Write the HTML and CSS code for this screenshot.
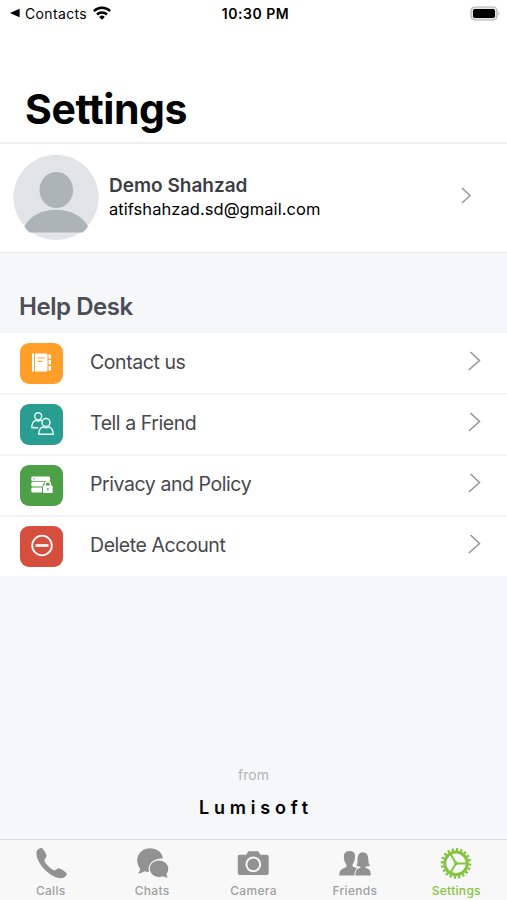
FILE: index.html
```html
<!DOCTYPE html>
<html lang="en">
  <head>
    <meta charset="UTF-8" />
    <meta name="viewport" content="width=device-width, initial-scale=1.0" />
    <title>Settings</title>
    <link rel="stylesheet" href="styles.css">
  </head>
  <body>
    <div class="screen">
      <header class="status-bar">
        <div class="status-left">
          <svg width="10" height="10" viewBox="0 0 10 10"><path d="M0 5L9.6 .8v8.4z"/></svg>
          <span class="status-back">Contacts</span>
          <svg class="wifi" width="18" height="14" viewBox="0 0 18 14" fill="none" stroke="#000" stroke-width="2.5">
            <path d="M.9 5.2a11.5 11.5 0 0 1 16.2 0"/>
            <path d="M4 8.5a7.1 7.1 0 0 1 10 0"/>
            <path d="M9 13.7L6.2 10.9a4 4 0 0 1 5.6 0z" fill="#000" stroke="none"/>
          </svg>
        </div>
        <span class="status-time">10:30 PM</span>
        <div class="status-right">
          <svg width="31" height="15" viewBox="0 0 31 15">
            <rect x="1" y="1" width="26" height="13" rx="3.8" fill="#e6e6e6" stroke="#b4b4b4" stroke-width="1.2"/>
            <rect x="3" y="3" width="22" height="9" rx="1.8"/>
            <path d="M28.400 5.200q2 2.300 0 4.600z" fill="#b4b4b4"/>
          </svg>
        </div>
      </header>

      <h1 class="page-title">Settings</h1>

      <section class="profile">
        <svg class="avatar" width="86" height="86" viewBox="0 0 86 86">
          <circle cx="43" cy="42.500" r="42.700" fill="#e1e5e7"/>
          <ellipse cx="43.300" cy="35" rx="16.800" ry="18" fill="#acb4b6"/>
          <path d="M11.300 71.500C17 61 29 54.700 43 54.700S69.500 61 75 71.500Q72.500 75 69.500 77.500H16.500Q13.500 75 11.300 71.500z" fill="#acb4b6"/>
        </svg>
        <div class="profile-text">
          <div class="profile-name">Demo Shahzad</div>
          <div class="profile-email">atifshahzad.sd@gmail.com</div>
        </div>
        <svg class="chevron" width="10" height="17" viewBox="0 0 10 17"><path d="M1 1l8 7.500-8 7.500"/></svg>
      </section>

      <h2 class="section-title">Help Desk</h2>

      <ul class="menu">
        <li class="menu-item">
          <span class="menu-icon orange">
            <svg width="43" height="40" viewBox="0 0 43 40" fill="#fff">
              <rect x="12" y="10.500" width="2" height="18"/>
              <path d="M15 10.500h11q1.500 0 1.500 1.500v15q0 1.500-1.500 1.500H15z"/>
              <path d="M28.500 11.500h1.500q1 0 1 1v3.300h-2.500zM28.500 17h2.500v4.500h-2.500zM28.500 23h2.500v3.500q0 1-1 1h-1.500z"/>
              <path d="M18 15h6.500M18 18.300h4" stroke="#ff9f2a" stroke-width="1.200"/>
            </svg>
          </span>
          <span class="menu-label">Contact us</span>
          <svg class="chevron" width="13" height="20" viewBox="0 0 13 20"><path d="M2.500 1l9 8.500L.8 19"/></svg>
        </li>
        <li class="menu-item">
          <span class="menu-icon teal">
            <svg width="43" height="40" viewBox="0 0 43 40" fill="none" stroke="#e5fffb" stroke-width="1.400" stroke-linejoin="round">
              <circle cx="18.200" cy="12.200" r="3.500"/>
              <path d="M18.200 23.700h-6.300c0-4 1.300-6.500 4-7.500 1.500 1 3.200 1 4.700 0q1 .4 1.700 1.100"/>
              <circle cx="26" cy="18.500" r="4"/>
              <path d="M18.700 30.200c0-4 1.500-6.500 4.300-7.400 2 1.300 4.200 1.300 6.200 0 2.500 1 4 3.500 4 7.400z"/>
            </svg>
          </span>
          <span class="menu-label">Tell a Friend</span>
          <svg class="chevron" width="13" height="20" viewBox="0 0 13 20"><path d="M2.500 1l9 8.500L.8 19"/></svg>
        </li>
        <li class="menu-item">
          <span class="menu-icon green">
            <svg width="43" height="40" viewBox="0 0 43 40" fill="#fff">
              <rect x="11.300" y="11.500" width="18.800" height="4.700" rx="1.300"/>
              <path d="M12.600 17h12.200q-2 1.500-2.300 4.500h-9.900q-1.300 0-1.300-1.300v-2q0-1.200 1.300-1.200zM12.600 22.500h9.400v5h-9.400q-1.300 0-1.300-1.300v-2.400q0-1.300 1.300-1.300z"/>
              <rect x="23" y="20.500" width="9.700" height="7.500" rx="1"/>
              <path d="M25.200 21v-1.600a2.600 2.600 0 0 1 5.200 0V21" fill="none" stroke="#fff" stroke-width="1.500"/>
              <path d="M27.900 23v2.500" stroke="#4da045" stroke-width="1.300"/>
              <circle cx="14" cy="13.700" r=".7" fill="#4da045"/>
            </svg>
          </span>
          <span class="menu-label">Privacy and Policy</span>
          <svg class="chevron" width="13" height="20" viewBox="0 0 13 20"><path d="M2.500 1l9 8.500L.8 19"/></svg>
        </li>
        <li class="menu-item">
          <span class="menu-icon red">
            <svg width="43" height="40" viewBox="0 0 43 40" fill="none" stroke="#fff">
              <circle cx="22" cy="19.500" r="9.800" stroke-width="1.800"/>
              <path d="M15.500 19.500h13" stroke-width="2.600"/>
            </svg>
          </span>
          <span class="menu-label">Delete Account</span>
          <svg class="chevron" width="13" height="20" viewBox="0 0 13 20"><path d="M2.500 1l9 8.500L.8 19"/></svg>
        </li>
      </ul>

      <footer class="credit">
        <div class="credit-from">from</div>
        <div class="credit-name">Lumisoft</div>
      </footer>

      <nav class="tab-bar">
        <a class="tab">
          <svg width="40" height="34" viewBox="0 0 40 34">
            <path d="M5.600 5.500C6.500 3.300 9.300 1.700 11 2.200c1.700 1 4.500 6 4.600 7.800.1 1.600-2.400 2.700-2.200 4.400.5 2.800 7 9.300 10 9.900 1.700.2 2.400-2.100 4.200-2 2.100.3 7.300 3.600 8 5.200.5 1.700-1.600 4-3.800 4.600C21 34 3.500 16.500 5.600 5.500z"/>
          </svg>
          <span>Calls</span>
        </a>
        <a class="tab">
          <svg width="40" height="34" viewBox="0 0 40 34">
            <path d="M18 2.200C25 2.200 30.700 7 30.800 12.500 23 11.700 16 17 16.600 23.800q.1 1.300.5 2.100-2.300.1-4.900-.6-2.600 2.300-6 2.100 1.700-2 2-4.700C6.500 20.700 5.200 17.500 5.200 14.300 5.200 7.500 11 2.200 18 2.200z"/>
            <path d="M27 14.500c5.300 0 9.300 3.700 9.300 8.300q0 3-1.900 5 .1 2.100 1.500 3.800-2.800 0-4.800-1.400-2 .8-4.200.7c-5.200-.2-9.100-3.800-9.100-8.200 0-4.600 4-8.200 9.200-8.200z"/>
          </svg>
          <span>Chats</span>
        </a>
        <a class="tab">
          <svg width="40" height="34" viewBox="0 0 40 34">
            <path d="M6.500 8.700h6.600l2.400-3.400h9.600l2.400 3.400H34q1.700 0 1.700 1.700v16.900q0 1.700-1.700 1.700H6.500q-1.700 0-1.700-1.700V10.400q0-1.700 1.700-1.700z"/>
            <circle cx="20.300" cy="18.300" r="6.900" fill="none" stroke="#f8f8f8" stroke-width="2"/>
          </svg>
          <span>Camera</span>
        </a>
        <a class="tab">
          <svg width="40" height="34" viewBox="0 0 40 34">
            <path d="M14.500 5c3.600 0 5.900 2 5.500 6-.1 3-.8 5.500-2.400 7.200v2.200l4.500 1.800q-2.500 2-2.800 7.400H4.300c.2-5.500 1.700-6.600 7.100-8.600v-2.700c-1.500-1.300-2-3-2.300-5.100C8.200 8 10 5 14.500 5z"/>
            <path d="M27.500 6.200c4.600 0 5.800 3.600 5.900 7.700.1 3 .5 4.600 1.800 5.700q-2 1.200-4.700.9v1.200c4.500 1.700 5 2.600 5.300 7.900H20.400c.2-5.200.8-6.200 5-7.900v-1.200q-2.600.2-4.100-.9c2-2.100.8-5 1.300-8 .6-3.300 2.200-5.400 4.900-5.400z"/>
          </svg>
          <span>Friends</span>
        </a>
        <a class="tab active">
          <svg width="40" height="34" viewBox="0 0 40 34" fill="none" stroke="currentColor">
            <circle cx="20" cy="17.400" r="11.300" stroke-width="3"/>
            <circle cx="20" cy="17.400" r="13.900" stroke-width="2.800" pathLength="80" stroke-dasharray="2 2"/>
            <path d="M20 17.400H30M20 17.400L14.700 8.200M20 17.400L14.700 26.600" stroke-width="2"/>
            <circle cx="20" cy="17.400" r="1.500"/>
          </svg>
          <span>Settings</span>
        </a>
      </nav>
    </div>
  </body>
</html>
```

FILE: styles.css
```css
:root {
  --background: #f5f7f9;
  --line: #efeff1;
  --text: #47474c;
  --muted: #929292;
  --accent: #85c440;
}

* {
  box-sizing: border-box;
}

body {
  margin: 0;
  font-family: Inter, "Liberation Sans", sans-serif;
  background-color: var(--background);
  color: #000;
}

svg {
  display: block;
  flex-shrink: 0;
}

.screen {
  display: flex;
  flex-direction: column;
  height: 900px;
}

.status-bar {
  display: grid;
  grid-template-columns: 1fr auto 1fr;
  align-items: center;
  height: 28px;
  padding: 0 6px 2px 10px;
  background-color: #fff;
}

.status-left {
  display: flex;
  align-items: center;
}

.status-back {
  margin-left: 5px;
  font-size: 14px;
  letter-spacing: 0.35px;
}

.wifi {
  margin-left: 6px;
  margin-top: -1px;
}

.status-time {
  font-size: 14px;
  font-weight: 600;
  letter-spacing: 0.55px;
}

.status-right {
  display: flex;
  justify-content: flex-end;
}

.page-title {
  margin: 0;
  height: 116px;
  padding: 56px 25px 0;
  font-size: 41px;
  line-height: 50px;
  font-weight: 700;
  letter-spacing: -0.4px;
  background-color: #fff;
  border-bottom: 2px solid var(--line);
}

.profile {
  display: flex;
  align-items: center;
  height: 109px;
  padding: 0 36px 0 13px;
  background-color: #fff;
  border-bottom: 1px solid #ececee;
}

.profile-text {
  flex: 1;
  margin: -3px 0 0 10px;
}

.profile-name {
  font-size: 19px;
  line-height: 25px;
  font-weight: 600;
  color: #3d3d45;
}

.profile-email {
  font-size: 16.5px;
  line-height: 23px;
  letter-spacing: 0.05px;
}

.chevron {
  fill: none;
  stroke: #94949b;
  stroke-width: 1.5;
}

.profile .chevron {
  margin-top: -5px;
}

.section-title {
  margin: 0;
  height: 80px;
  padding: 38px 19px 0;
  font-size: 24px;
  line-height: 32px;
  font-weight: 600;
  letter-spacing: -0.45px;
  color: #4b4c57;
}

.menu {
  margin: 0;
  padding: 1px 0 0;
  list-style: none;
  background-color: #fff;
}

.menu-item {
  display: flex;
  align-items: center;
  height: 61px;
  padding: 0 26px 0 20px;
  border-bottom: 2px solid #f3f4f6;
}

.menu-item:last-child {
  border-color: var(--background);
}

.menu-item .chevron {
  margin-top: -6px;
}

.menu-icon {
  width: 43px;
  height: 41px;
  border-radius: 9px;
}

.orange {
  background-color: #ff9f2a;
}

.teal {
  background-color: #2a9d91;
}

.green {
  background-color: #4da045;
}

.red {
  background-color: #d64e3e;
}

.menu-label {
  flex: 1;
  margin: -3px 0 0 27px;
  font-size: 19.5px;
  letter-spacing: -0.43px;
  color: var(--text);
}

.credit {
  margin-top: auto;
  padding-bottom: 19px;
  text-align: center;
}

.credit-from {
  font-size: 14px;
  line-height: 20px;
  color: #b4b4b6;
}

.credit-name {
  margin-top: 11px;
  padding-left: 5px;
  font-size: 18px;
  line-height: 24px;
  font-weight: 600;
  letter-spacing: 4.8px;
}

.tab-bar {
  display: grid;
  grid-template-columns: repeat(5, 1fr);
  height: 61px;
  border-top: 1px solid #dcdddf;
  background-color: #f8f8f8;
}

.tab {
  display: flex;
  flex-direction: column;
  align-items: center;
  padding-top: 6px;
  font-size: 12px;
  line-height: 16px;
  font-weight: 500;
  letter-spacing: 0.3px;
  color: #a0a0a0;
}

.tab svg {
  fill: var(--muted);
}

.tab span {
  margin-top: 3px;
}

.tab.active {
  color: var(--accent);
}

.tab.active svg {
  fill: none;
}
```
